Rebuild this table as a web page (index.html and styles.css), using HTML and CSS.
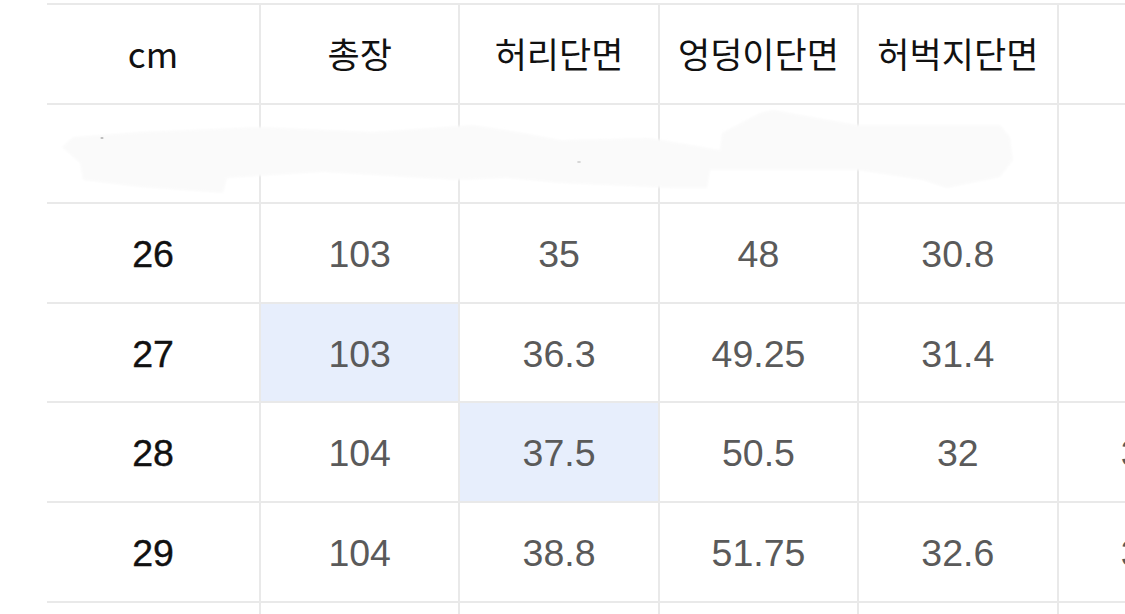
FILE: index.html
```html
<!DOCTYPE html>
<html lang="ko">
<head>
<meta charset="utf-8">
<title>사이즈 표</title>
<link rel="stylesheet" href="styles.css">
</head>
<body>
<div class="sheet">
  <div class="size-table">
    <div class="cell head">cm</div>
    <div class="cell head">총장</div>
    <div class="cell head">허리단면</div>
    <div class="cell head">엉덩이단면</div>
    <div class="cell head">허벅지단면</div>
    <div class="cell head"></div>

    <div class="cell"></div>
    <div class="cell"></div>
    <div class="cell"></div>
    <div class="cell"></div>
    <div class="cell"></div>
    <div class="cell"></div>

    <div class="cell label">26</div>
    <div class="cell">103</div>
    <div class="cell">35</div>
    <div class="cell">48</div>
    <div class="cell">30.8</div>
    <div class="cell">32</div>

    <div class="cell label">27</div>
    <div class="cell hl">103</div>
    <div class="cell">36.3</div>
    <div class="cell">49.25</div>
    <div class="cell">31.4</div>
    <div class="cell">33</div>

    <div class="cell label">28</div>
    <div class="cell">104</div>
    <div class="cell hl">37.5</div>
    <div class="cell">50.5</div>
    <div class="cell">32</div>
    <div class="cell">33.5</div>

    <div class="cell label">29</div>
    <div class="cell">104</div>
    <div class="cell">38.8</div>
    <div class="cell">51.75</div>
    <div class="cell">32.6</div>
    <div class="cell">34.2</div>

    <div class="cell label">30</div>
    <div class="cell">105</div>
    <div class="cell">40</div>
    <div class="cell">53</div>
    <div class="cell">33.2</div>
    <div class="cell">35</div>
  </div>
  <svg class="smudge" viewBox="0 0 1125 614" width="1125" height="614" aria-hidden="true">
    <defs>
      <filter id="soft" x="-5%" y="-20%" width="110%" height="140%">
        <feGaussianBlur stdDeviation="1.2"/>
      </filter>
    </defs>
    <path filter="url(#soft)" fill="#fafafa" d="M62 147 L73 137 L140 132 L260 127 L373 132 L473 125 L523 133 L560 140 L650 138 L720 150 L722 133 L760 113 L773 110 L857 125 L1000 125 L1010 137 L1013 160 L1000 177 L947 188 L923 180 L857 170 L710 170 L707 188 L673 188 L560 183 L507 178 L457 180 L323 172 L227 178 L223 193 L140 187 L83 180 L80 163 Z"/>
    <ellipse cx="102" cy="138" rx="1.6" ry="1" fill="#b9b9b9"/>
    <ellipse cx="579" cy="162" rx="2" ry="0.8" fill="#c6c6c6"/>
  </svg>
</div>
</body>
</html>
```
FILE: styles.css
```css
html, body {
  margin: 0;
  padding: 0;
  background: #ffffff;
  overflow: hidden;
}

.sheet {
  position: relative;
  width: 1125px;
  height: 614px;
  overflow: hidden;
  box-sizing: border-box;
  padding: 3px 0 0 47px;
}

.size-table {
  display: grid;
  grid-template-columns: 214px repeat(5, 199.4px);
  grid-auto-rows: 99.6px;
  border-top: 2px solid #e9e9e9;
  width: max-content;
}

.cell {
  display: flex;
  align-items: center;
  justify-content: center;
  box-sizing: border-box;
  border-bottom: 2px solid #e9e9e9;
  border-right: 2px solid #e9e9e9;
  padding-top: 3px;
  font-family: "Liberation Sans", "Noto Sans CJK KR", sans-serif;
  font-size: 37.5px;
  color: #5a5a5a;
  white-space: nowrap;
}

.cell.head {
  padding-top: 0;
  padding-bottom: 3px;
  font-family: "Noto Sans CJK KR", "Liberation Sans", sans-serif;
  font-size: 35px;
  color: #111111;
}

.cell.label {
  color: #111111;
  -webkit-text-stroke: 0.4px #111111;
}

.cell.hl {
  background: #e7eefc;
}

.smudge {
  position: absolute;
  top: 0;
  left: 0;
  pointer-events: none;
}
```
